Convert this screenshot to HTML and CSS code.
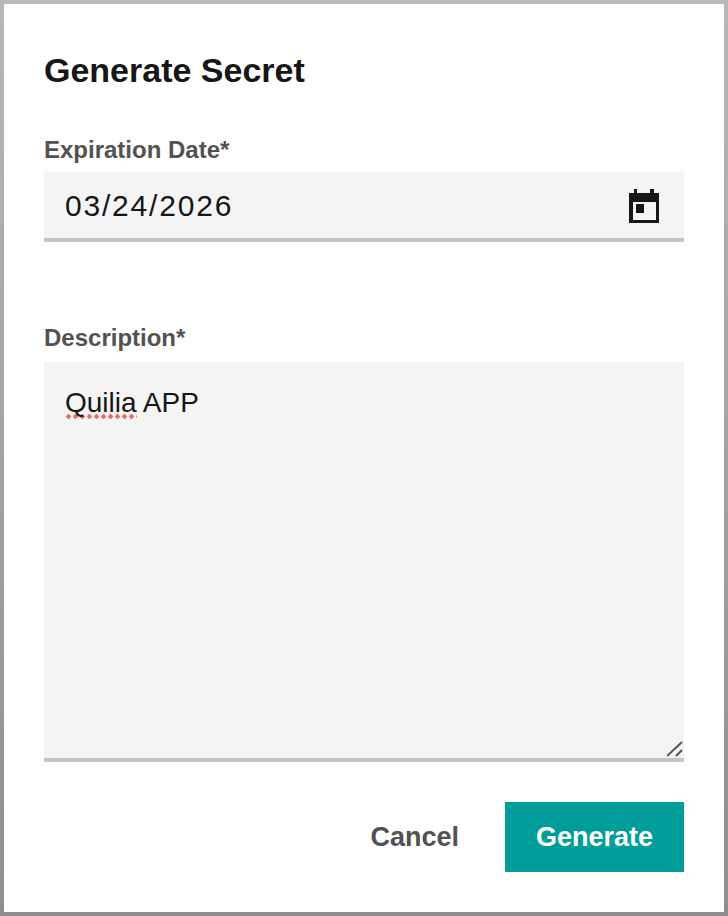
FILE: index.html
```html
<!DOCTYPE html>
<html lang="en">
<head>
    <meta charset="UTF-8">
    <title>Generate Secret</title>
    <link rel="stylesheet" href="styles.css">
</head>

<body>

<div class="dialog">

    <h1 class="title">Generate Secret</h1>

    <label class="fieldLabel">Expiration Date*</label>
    <div class="dateField">
        <span class="dateValue">03/24/2026</span>
        <svg class="calendarIcon" width="30" height="34" viewBox="0 0 30 34">
            <path fill="#161616" d="M5 0h3v4h13V0h4v4h5v30H0V4h5z"/>
            <path fill="#f4f4f4" d="M4 13h23v18H4z"/>
            <path fill="#161616" d="M7 15h8v9H7z"/>
        </svg>
    </div>

    <label class="fieldLabel descriptionLabel">Description*</label>
    <div class="descriptionField">
        <span class="misspelled">Quilia</span> APP
        <svg class="resizeGrip" width="16" height="16" viewBox="0 0 16 16">
            <path stroke="#555" stroke-width="2" fill="none" d="M0 15 15 1M9 15l6-6"/>
        </svg>
    </div>

    <div class="actions">
        <button class="cancelButton">Cancel</button>
        <button class="generateButton">Generate</button>
    </div>

</div>

</body>
</html>
```

FILE: styles.css
```css
html, body {
    margin: 0;
    padding: 0;
}

body {
    font-family: "Liberation Sans", Arial, sans-serif;
    background-color: #ffffff;
}

.dialog {
    box-sizing: border-box;
    width: 728px;
    height: 916px;
    padding: 0 40px;
    background-color: #ffffff;
    border: 4px solid #a8a8a8;
    /* screenshot shadow gets darker towards the bottom */
    border-image: linear-gradient(#b8b8b8, #8e8e8e) 4;
}

.title {
    margin: 46px 0 0 0;
    height: 40px;
    font-size: 34px;
    line-height: 40px;
    font-weight: bold;
    color: #161616;
}

.fieldLabel {
    display: block;
    height: 28px;
    font-size: 24px;
    line-height: 28px;
    font-weight: bold;
    color: #525252;
}

.title + .fieldLabel {
    margin-top: 46px;
}

.descriptionLabel {
    margin-top: 82px;
}

.dateField {
    box-sizing: border-box;
    display: flex;
    align-items: center;
    justify-content: space-between;
    height: 70px;
    margin-top: 8px;
    padding: 2px 25px 0 21px;
    background-color: #f4f4f4;
    border-bottom: 4px solid #c4c4c4;
}

.dateValue {
    font-size: 30px;
    letter-spacing: 1.8px;
    color: #161616;
}

.calendarIcon {
    display: block;
}

.descriptionField {
    box-sizing: border-box;
    position: relative;
    height: 400px;
    margin-top: 10px;
    padding: 25px 21px 0 21px;
    font-size: 28px;
    line-height: 32px;
    color: #161616;
    background-color: #f4f4f4;
    border-bottom: 4px solid #c4c4c4;
}

/* spellcheck dots, bigger than what text-decoration dotted draws */
.misspelled {
    padding-bottom: 1px;
    background-image: radial-gradient(circle, #ee6a63 2px, transparent 2.4px);
    background-size: 7px 5px;
    background-position: 0 100%;
    background-repeat: repeat-x;
}

.resizeGrip {
    position: absolute;
    right: 1px;
    bottom: 1px;
}

.actions {
    display: flex;
    justify-content: flex-end;
    margin-top: 40px;
}

.cancelButton {
    height: 70px;
    padding: 0;
    margin-right: 46px;
    border: none;
    background: none;
    font-family: inherit;
    font-size: 27px;
    font-weight: bold;
    color: #525252;
}

.generateButton {
    width: 179px;
    height: 70px;
    padding: 0;
    border: none;
    background-color: #009d9a;
    font-family: inherit;
    font-size: 27px;
    font-weight: bold;
    color: #ffffff;
}
```
